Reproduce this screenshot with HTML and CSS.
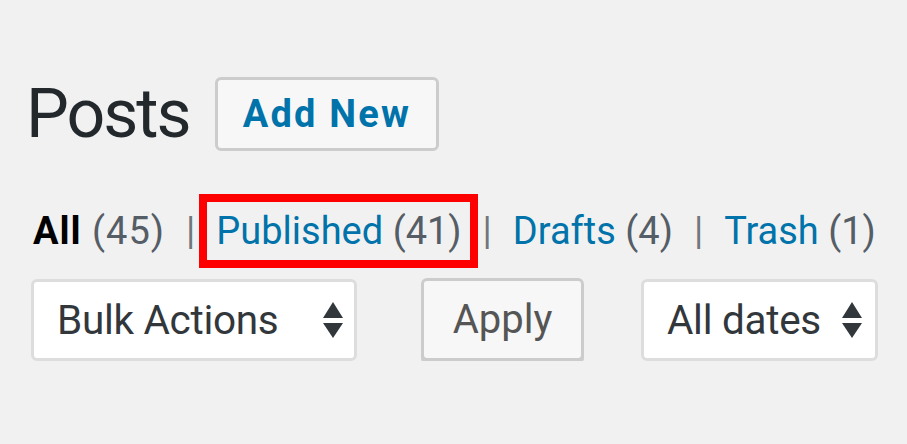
FILE: index.html
```html
<!DOCTYPE html>
<html lang="en">
<head>
  <meta charset="UTF-8">
  <title>Posts</title>
  <link rel="stylesheet" href="styles.css">
</head>
<body>
  <div class="wrap">
    <!-- Heading -->
    <div class="page-header">
      <h1 class="page-title">Posts</h1>
      <a class="page-title-action" href="#">Add New</a>
    </div>

    <!-- Status filters -->
    <ul class="subsubsub">
      <li><a class="current" href="#">All <span class="count">(45)</span></a></li>
      <li class="sep">|</li>
      <li><a class="highlight" href="#">Published <span class="count">(41)</span></a></li>
      <li class="sep">|</li>
      <li><a href="#">Drafts <span class="count">(4)</span></a></li>
      <li class="sep">|</li>
      <li><a href="#">Trash <span class="count">(1)</span></a></li>
    </ul>

    <!-- Table nav -->
    <div class="tablenav">
      <div class="select select--bulk">
        <span>Bulk Actions</span>
        <svg class="select__arrows" width="20" height="36" viewBox="0 0 20 36"><polygon points="10,0 20,16 0,16"/><polygon points="0,21 20,21 10,36"/></svg>
      </div>
      <button class="button">Apply</button>
      <div class="select select--dates">
        <span>All dates</span>
        <svg class="select__arrows" width="20" height="36" viewBox="0 0 20 36"><polygon points="10,0 20,16 0,16"/><polygon points="0,21 20,21 10,36"/></svg>
      </div>
    </div>
  </div>
</body>
</html>
```

FILE: styles.css
```css
* {
  box-sizing: border-box;
}

body {
  margin: 0;
  background-color: #f1f1f1;
  font-family: Roboto, "Open Sans", sans-serif;
}

.wrap {
  padding: 0 26px;
}

/* Heading */
.page-header {
  display: flex;
  align-items: center;
  height: 74px;
  margin-top: 77px;
}

.page-title {
  margin: 0;
  font-size: 68px;
  font-weight: 400;
  line-height: 1;
  letter-spacing: -2px;
  color: #23282d;
}

.page-title-action {
  display: flex;
  align-items: center;
  height: 74px;
  margin-left: 25px;
  padding: 0 25px;
  border: 3px solid #ccc;
  border-radius: 6px;
  background-color: #f7f7f7;
  font-size: 38px;
  font-weight: 700;
  letter-spacing: 2.2px;
  color: #0073aa;
  text-decoration: none;
}

/* Status filters */
.subsubsub {
  display: flex;
  align-items: baseline;
  list-style: none;
  margin: 58px -26px 0 7px;
  padding: 0;
  font-size: 38px;
  line-height: 44px;
  white-space: nowrap;
}

.subsubsub li {
  flex-shrink: 0;
}

.subsubsub a {
  color: #0073aa;
  text-decoration: none;
}

.subsubsub a.current {
  color: #000;
  font-weight: 700;
  letter-spacing: 1px;
}

.subsubsub .count {
  color: #555d66;
  font-weight: 400;
}

.subsubsub .sep {
  margin: 0 21px;
  color: #72777c;
}

.subsubsub .highlight {
  display: inline-block;
  position: relative;
}

.subsubsub .highlight::after {
  content: "";
  position: absolute;
  top: -15px;
  right: -16px;
  bottom: -15px;
  left: -17px;
  border: 8px solid #ff0000;
}

/* Table nav */
.tablenav {
  display: flex;
  align-items: flex-start;
  margin: 25px 0 0 5px;
}

.select {
  display: flex;
  align-items: center;
  justify-content: space-between;
  height: 82px;
  margin-top: 1px;
  padding: 0 11px 0 23px;
  border: 3px solid #ddd;
  border-radius: 6px;
  background-color: #fff;
  font-size: 40.5px;
  letter-spacing: -0.3px;
  color: #32373c;
}

.select--bulk {
  width: 326px;
}

.select--dates {
  width: 237px;
  margin-left: 57px;
  padding-right: 13px;
}

.select__arrows {
  fill: #32373c;
}

.button {
  width: 163px;
  height: 83px;
  margin-left: 64px;
  padding: 0;
  border: 3px solid #ccc;
  border-radius: 6px;
  background-color: #f7f7f7;
  box-shadow: 0 3px 0 #ccc;
  font-family: inherit;
  font-size: 40px;
  color: #555;
}
```
